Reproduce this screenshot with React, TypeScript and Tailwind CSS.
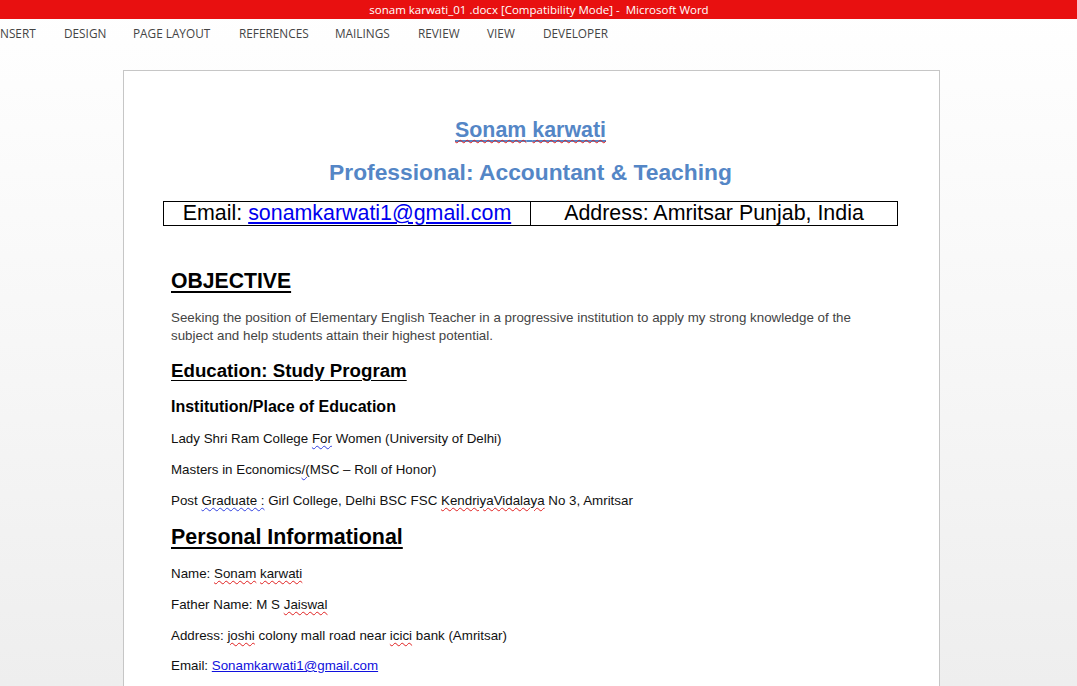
import React from "react";

const tabs = [
  { label: "NSERT", w: "w-[64px]" },
  { label: "DESIGN", w: "w-[69px]" },
  { label: "PAGE LAYOUT", w: "w-[106px]" },
  { label: "REFERENCES", w: "w-[96px]" },
  { label: "MAILINGS", w: "w-[83px]" },
  { label: "REVIEW", w: "w-[69px]" },
  { label: "VIEW", w: "w-[56px]" },
  { label: "DEVELOPER", w: "w-auto" },
];

const Spell: React.FC<{ children: React.ReactNode }> = ({ children }) => (
  <span className="underline decoration-wavy decoration-[#e02020] decoration-1 underline-offset-2">{children}</span>
);

const Grammar: React.FC<{ children: React.ReactNode }> = ({ children }) => (
  <span className="underline decoration-wavy decoration-[#3040e0] decoration-1 underline-offset-2">{children}</span>
);

const Line: React.FC<{ children: React.ReactNode }> = ({ children }) => (
  <p className="mt-[13px] text-[13.35px] leading-[18px] text-[#111]">{children}</p>
);

const App: React.FC = () => {
  return (
    <div className="w-[1077px] h-[686px] overflow-hidden flex flex-col bg-gradient-to-b from-white via-[#f7f7f7] to-[#eeeeee] font-['Liberation_Sans',Arial,sans-serif]">
      {/* title bar */}
      <div className="h-[19px] shrink-0 bg-[#e81010] flex items-center justify-center text-white text-[11.5px] font-['Open_Sans','Noto_Sans',sans-serif] pl-[1px]">
        sonam karwati_01 .docx [Compatibility Mode] -&nbsp; Microsoft Word
      </div>

      {/* ribbon tabs */}
      <div className="h-[29px] shrink-0 flex items-center pt-[1px] text-[11.8px] text-[#444] font-['Open_Sans','Noto_Sans',sans-serif]">
        {tabs.map((t) => (
          <span key={t.label} className={`${t.w} shrink-0`}>{t.label}</span>
        ))}
      </div>

      {/* document area */}
      <div className="flex-1 pt-[22px] pl-[123px]">
        <div className="w-[817px] h-full bg-white border border-b-0 border-[#c6c6c6] pt-[47px] pl-[47px] pr-[42px]">
          <h1 className="text-center -ml-[7px] text-[21.4px] leading-[24px] font-bold text-[#5486c6]">
            <span className="underline decoration-[#5486c6] underline-offset-[3px]">
              <Spell>Sonam</Spell> <Spell>karwati</Spell>
            </span>
          </h1>
          <h2 className="mt-[18px] text-center -ml-[7px] text-[22.8px] leading-[24px] font-bold text-[#5486c6]">
            Professional: Accountant &amp; Teaching
          </h2>

          <div className="mt-[17px] -ml-[8px] w-[735px] grid grid-cols-[367px_1fr] border border-black text-[21.4px] leading-[23px] text-black">
            <div className="border-r border-black text-center">
              Email: <span className="text-[#0000ee] underline">sonamkarwati1@gmail.com</span>
            </div>
            <div className="text-center">Address: Amritsar Punjab, India</div>
          </div>

          <h3 className="mt-[43px] text-[21.2px] leading-[24px] font-bold underline underline-offset-[3px] text-black">OBJECTIVE</h3>
          <p className="mt-[16px] w-[700px] text-[13.35px] leading-[18px] text-[#444]">
            Seeking the position of Elementary English Teacher in a progressive institution to apply my strong knowledge of the
            subject and help students attain their highest potential.
          </p>

          <h3 className="mt-[14px] text-[18.7px] leading-[24px] font-bold underline underline-offset-[3px] text-black">
            Education: Study Program
          </h3>
          <h4 className="mt-[14px] text-[16px] leading-[20px] font-bold text-black">Institution/Place of Education</h4>

          <Line>
            Lady Shri Ram College <Grammar>For</Grammar> Women (University of Delhi)
          </Line>
          <Line>
            Masters in Economics<Grammar>/(</Grammar>MSC – Roll of Honor)
          </Line>
          <Line>
            Post <Grammar>Graduate :</Grammar> Girl College, Delhi BSC FSC <Spell>KendriyaVidalaya</Spell> No 3, Amritsar
          </Line>

          <h3 className="mt-[14px] text-[21.4px] leading-[26px] font-bold underline underline-offset-[3px] text-black">
            Personal Informational
          </h3>

          <p className="mt-[15px] text-[13.35px] leading-[18px] text-[#111]">
            Name: <Spell>Sonam</Spell> <Spell>karwati</Spell>
          </p>
          <Line>
            Father Name: M S <Spell>Jaiswal</Spell>
          </Line>
          <Line>
            Address: <Spell>joshi</Spell> colony mall road near <Spell>icici</Spell> bank (Amritsar)
          </Line>
          <p className="mt-[12px] text-[13.35px] leading-[18px] text-[#111]">
            Email: <span className="text-[#1010dd] underline">Sonamkarwati1@gmail.com</span>
          </p>
        </div>
      </div>
    </div>
  );
};

export default App;
